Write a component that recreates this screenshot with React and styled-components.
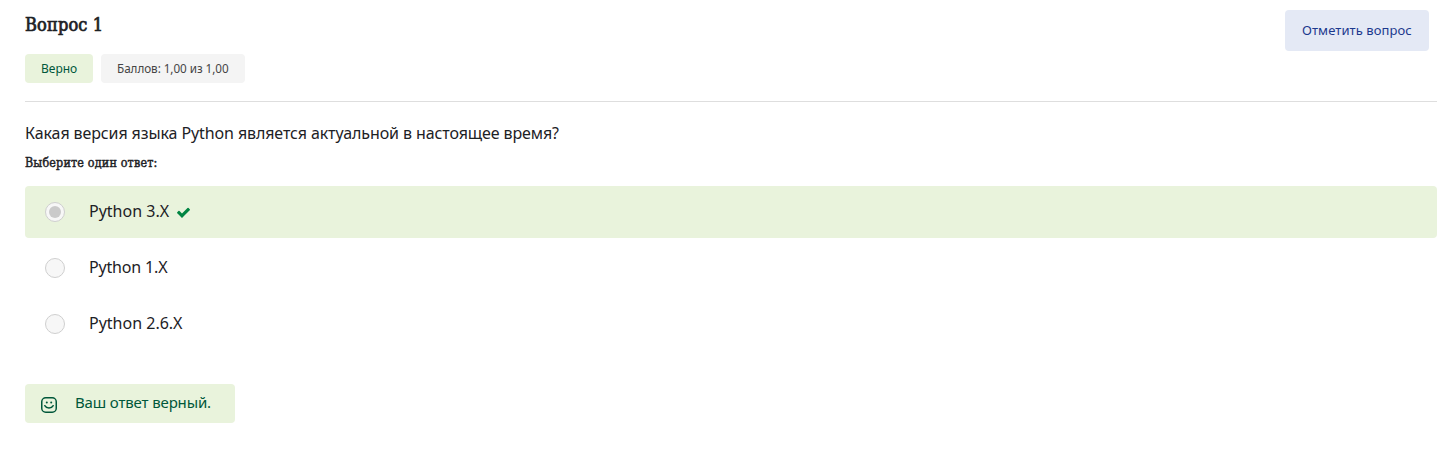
import React from "react";
import styled, { createGlobalStyle } from "styled-components";

const GlobalStyle = createGlobalStyle`
  * { box-sizing: border-box; }
  body {
    margin: 0;
    background: #fff;
    color: #1d2125;
    font-family: "Noto Sans", "Open Sans", sans-serif;
  }
`;

const Page = styled.main`
  min-height: 467px;
  padding: 10px 8px 0 25px;
`;

const Header = styled.header`
  display: flex;
  justify-content: space-between;
  align-items: flex-start;
  height: 92px;
  padding-right: 8px;
  border-bottom: 1px solid #dedede;
`;

const Title = styled.h1`
  height: 30px;
  margin: 0 0 14px;
  font: 400 18px/29px "DejaVu Serif Condensed", "DejaVu Serif", serif;
  font-stretch: condensed;
  letter-spacing: 0.15px;
  -webkit-text-stroke: 0.7px currentColor;
`;

const Badges = styled.div`
  display: flex;
  gap: 8px;
`;

const Badge = styled.span`
  width: ${(p) => p.$width}px;
  height: 29px;
  padding-left: 16px;
  border-radius: 4px;
  font-size: ${(p) => p.$size || 12}px;
  line-height: 29px;
  white-space: nowrap;
  letter-spacing: ${(p) => p.$spacing || 0}px;
  color: ${(p) => (p.$correct ? "#00573a" : "#454545")};
  background: ${(p) => (p.$correct ? "#e9f3dc" : "#f4f4f4")};
`;

const FlagButton = styled.button`
  width: 144px;
  height: 41px;
  padding: 0 0 0 17px;
  border: 0;
  border-radius: 4px;
  background: #e4e9f5;
  color: #1c398e;
  font: 400 13px/41px "Noto Sans", sans-serif;
  letter-spacing: 0.08px;
  text-align: left;
  white-space: nowrap;
`;

const Question = styled.p`
  margin: 19px 0 0;
  font-size: 16px;
  line-height: 24px;
  letter-spacing: -0.105px;
`;

const Prompt = styled.h2`
  margin: 7px 0 13px;
  font: 400 12.4px/21px "DejaVu Serif Condensed", "DejaVu Serif", serif;
  font-stretch: condensed;
  letter-spacing: 0.18px;
  -webkit-text-stroke: 0.45px currentColor;
`;

const Answers = styled.div`
  display: flex;
  flex-direction: column;
  gap: 4px;
`;

const Answer = styled.label`
  display: flex;
  align-items: center;
  height: 52px;
  padding-left: 20px;
  border-radius: 4px;
  background: ${(p) => (p.$correct ? "#e9f3dc" : "transparent")};
`;

const Radio = styled.span`
  display: grid;
  place-items: center;
  width: 20px;
  height: 20px;
  margin-right: 24px;
  border: 1px solid #cfcfcf;
  border-radius: 50%;
  background: #f7f7f7;
`;

const Dot = styled.span`
  width: 12px;
  height: 12px;
  border-radius: 50%;
  background: #cacaca;
`;

const AnswerText = styled.span`
  padding-bottom: 2px;
  font-size: 16px;
  line-height: 24px;
  letter-spacing: ${(p) => p.$spacing}px;
`;

const CorrectMark = styled.svg`
  width: 15px;
  height: 15px;
  margin-left: 7px;
  fill: #008542;
`;

const Feedback = styled.div`
  display: flex;
  align-items: center;
  width: 210px;
  height: 39px;
  margin-top: 34px;
  padding-left: 16px;
  border-radius: 4px;
  background: #e9f3dc;
  color: #00573a;
`;

const Smile = styled.svg`
  width: 16px;
  height: 16px;
  margin: 3px 18px 0 0;
`;

const FeedbackText = styled.span`
  padding-bottom: 4px;
  font-size: 15px;
  line-height: 24px;
  letter-spacing: -0.14px;
  white-space: nowrap;
`;

const answers = [
  { text: "Python 3.X", selected: true, spacing: 0 },
  { text: "Python 1.X", spacing: -0.17 },
  { text: "Python 2.6.X", spacing: 0 },
];

export default function App() {
  return (
    <Page>
      <GlobalStyle />
      <Header>
        <div>
          <Title>Вопрос 1</Title>
          <Badges>
            <Badge $correct $width={68}>Верно</Badge>
            <Badge $width={144} $size={11.7} $spacing={-0.05}>Баллов: 1,00 из 1,00</Badge>
          </Badges>
        </div>
        <FlagButton>Отметить вопрос</FlagButton>
      </Header>
      <Question>Какая версия языка Python является актуальной в настоящее время?</Question>
      <Prompt>Выберите один ответ:</Prompt>
      <Answers>
        {answers.map((a) => (
          <Answer key={a.text} $correct={a.selected}>
            <Radio>{a.selected && <Dot />}</Radio>
            <AnswerText $spacing={a.spacing}>{a.text}</AnswerText>
            {a.selected && (
              <CorrectMark viewBox="0 0 1792 1792">
                <path d="M1671 566q0 40-28 68l-724 724-136 136q-28 28-68 28t-68-28l-136-136-362-362q-28-28-28-68t28-68l136-136q28-28 68-28t68 28l294 295 656-657q28-28 68-28t68 28l136 136q28 28 28 68z" />
              </CorrectMark>
            )}
          </Answer>
        ))}
      </Answers>
      <Feedback>
        <Smile viewBox="0 0 16 16" fill="none" stroke="currentColor" strokeWidth="1.5" strokeLinecap="round">
          <rect x=".75" y=".75" width="14.5" height="14.5" rx="4" />
          <path d="M3.8 8.7c1.8 3.2 6.6 3.2 8.4 0" />
          <circle cx="5.8" cy="5.6" r="1" fill="currentColor" stroke="none" />
          <circle cx="10.2" cy="5.6" r="1" fill="currentColor" stroke="none" />
        </Smile>
        <FeedbackText>Ваш ответ верный.</FeedbackText>
      </Feedback>
    </Page>
  );
}
